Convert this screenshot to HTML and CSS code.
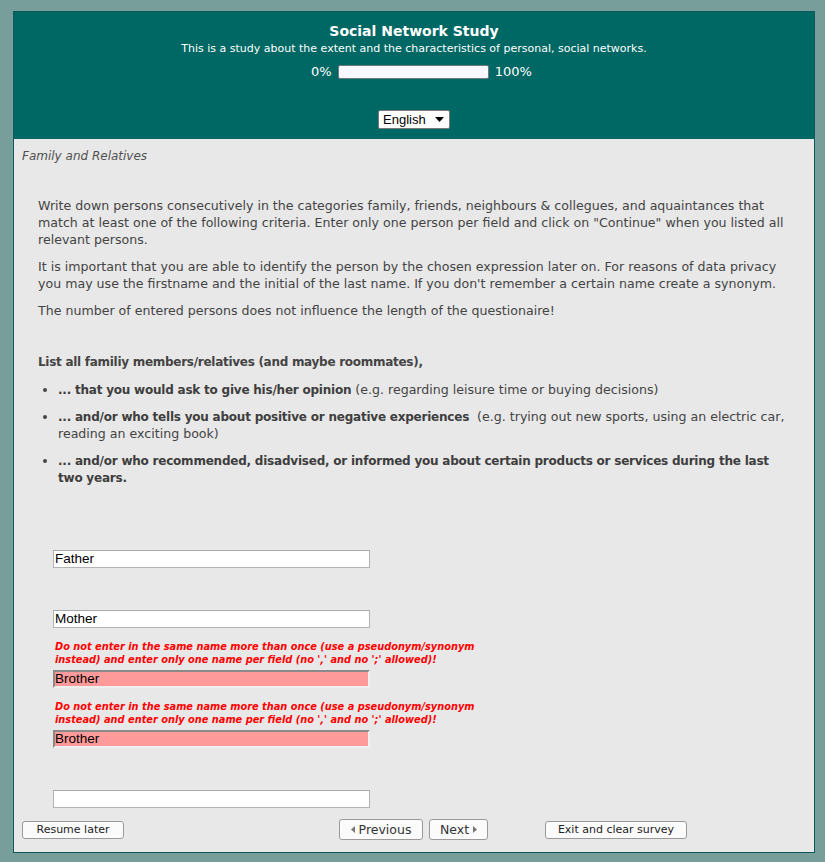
FILE: index.html
```html
<!DOCTYPE html>
<html>
<head>
<meta charset="utf-8">
<link rel="stylesheet" href="styles.css">
</head>
<body>
<div class="page">
  <header class="top">
    <h1 class="title">Social Network Study</h1>
    <p class="desc">This is a study about the extent and the characteristics of personal, social networks.</p>
    <div class="progress">
      <span>0%</span>
      <span class="bar"></span>
      <span>100%</span>
    </div>
    <div class="lang">
      <span class="select">English <svg width="9" height="5" viewBox="0 0 9 5"><path d="M0 0H9L4.5 5Z" fill="#000"/></svg></span>
    </div>
  </header>
  <main class="content">
    <div class="group">Family and Relatives</div>
    <div class="intro">
      <p>Write down persons consecutively in the categories family, friends, neighbours &amp; collegues, and aquaintances that match at least one of the following criteria. Enter only one person per field and click on "Continue" when you listed all relevant persons.</p>
      <p>It is important that you are able to identify the person by the chosen expression later on. For reasons of data privacy you may use the firstname and the initial of the last name. If you don't remember a certain name create a synonym.</p>
      <p>The number of entered persons does not influence the length of the questionaire!</p>
    </div>
    <div class="question">
      <p class="qhead">List all familiy members/relatives (and maybe roommates),</p>
      <ul class="crit">
        <li><b>... that you would ask to give his/her opinion</b> (e.g. regarding leisure time or buying decisions)</li>
        <li><b>... and/or who tells you about positive or negative experiences</b>&nbsp; (e.g. trying out new sports, using an electric car, reading an exciting book)</li>
        <li><b>... and/or who recommended, disadvised, or informed you about certain products or services during the last two years.</b></li>
      </ul>
    </div>
    <div class="fields">
      <div class="field"><div class="err"></div><div class="inp">Father</div></div>
      <div class="field"><div class="err"></div><div class="inp">Mother</div></div>
      <div class="field"><div class="err">Do not enter in the same name more than once (use a pseudonym/synonym instead) and enter only one name per field (no ',' and no ';' allowed)!</div><div class="inp bad">Brother</div></div>
      <div class="field"><div class="err">Do not enter in the same name more than once (use a pseudonym/synonym instead) and enter only one name per field (no ',' and no ';' allowed)!</div><div class="inp bad">Brother</div></div>
      <div class="field"><div class="err"></div><div class="inp"></div></div>
    </div>
    <div class="nav">
      <span class="btn small resume">Resume later</span>
      <span class="navmid">
        <span class="btn big prev"><svg width="4" height="7" viewBox="0 0 4 7"><path d="M4 0V7L0 3.5Z" fill="#777"/></svg> Previous</span>
        <span class="btn big next">Next <svg width="4" height="7" viewBox="0 0 4 7"><path d="M0 0V7L4 3.5Z" fill="#777"/></svg></span>
      </span>
      <span class="btn small exit">Exit and clear survey</span>
    </div>
  </main>
</div>
</body>
</html>
```
FILE: styles.css
```css
html, body { margin: 0; padding: 0; }
body {
  background: #789e9c;
  font-family: "DejaVu Sans", Verdana, sans-serif;
  width: 825px;
  height: 862px;
  overflow: hidden;
}
.page {
  margin: 11px 0 0 13px;
  width: 802px;
  border: 1px solid #0b5c59;
  background: #e8e8e8;
  height: 842px;
  box-sizing: border-box;
  display: flex;
  flex-direction: column;
}
.top {
  background: #006864;
  color: #fff;
  text-align: center;
  height: 127px;
  padding-top: 10px;
  box-sizing: border-box;
}
.title {
  margin: 0;
  font-size: 14px;
  line-height: 18px;
  font-weight: bold;
}
.desc {
  margin: 2px 0 0;
  font-size: 11px;
  line-height: 14px;
}
.progress {
  margin-top: 8px;
  display: flex;
  justify-content: center;
  align-items: center;
  gap: 6px;
  font-size: 13px;
  line-height: 16px;
  margin-left: 15px;
}
.bar {
  display: inline-block;
  width: 151px;
  height: 14px;
  box-sizing: border-box;
  background: #f7f8fd;
  border: 1px solid #6f7b7b;
  border-radius: 2px;
}
.lang {
  margin-top: 30px;
  display: flex;
  justify-content: center;
}
.select {
  display: inline-flex;
  align-items: center;
  justify-content: space-between;
  width: 72px;
  height: 19px;
  box-sizing: border-box;
  padding: 0 5px 0 4px;
  background: #fff;
  color: #000;
  border: 1px solid #7a7a7a;
  border-radius: 2px;
  font-family: "Liberation Sans", Arial, sans-serif;
  font-size: 13px;
}
.content {
  flex: 1;
  color: #444;
  font-size: 12.6px;
  position: relative;
}
.group {
  font-style: italic;
  font-size: 12px;
  padding: 9px 0 0 8px;
  line-height: 16px;
  color: #505050;
}
.intro {
  padding: 33px 19px 0 24px;
  line-height: 17px;
}
.intro p { margin: 0 0 10px; }
.question { padding: 25px 19px 0 24px; line-height: 17px; }
.qhead {
  margin: 0 0 10px;
  font-weight: bold;
  font-size: 12px;
  letter-spacing: -0.28px;
}
.crit { margin: 0; padding: 0 0 0 20px; }
.crit li { margin-bottom: 10px; line-height: 17px; }
.crit b {
  color: #3e3e3e;
  font-size: 12px;
  letter-spacing: -0.22px;
  line-height: 14px;
}
.fields { padding: 36px 0 0 39px; }
.field { height: 60px; display: flex; flex-direction: column; justify-content: flex-end; }
.field:first-child { height: 36px; }
.err {
  color: #ff0000;
  font-size: 9.8px;
  font-weight: bold;
  font-style: italic;
  line-height: 13px;
  width: 430px;
  margin-bottom: 4px;
  padding-left: 2px;
}
.inp {
  width: 317px;
  height: 18px;
  box-sizing: border-box;
  background: #fff;
  border: 1px solid #b2b2b8;
  border-top-color: #a9a9ae;
  font-family: "Liberation Sans", Arial, sans-serif;
  font-size: 13.5px;
  color: #000;
  line-height: 16px;
  padding-left: 1px;
}
.inp.bad {
  background: #ff9a9a;
  border: 2px solid #f0f0f0;
  border-top-color: #8a8a8a;
  border-left-color: #8a8a8a;
  line-height: 14px;
  padding-left: 0;
}
.nav {
  position: absolute;
  left: 8px;
  right: 0;
  bottom: 12px;
  display: flex;
  align-items: center;
}
.btn {
  display: inline-flex;
  align-items: center;
  justify-content: center;
  background: #fbfbfb;
  border: 1px solid #9a9a9a;
  border-radius: 3px;
  color: #222;
  box-sizing: border-box;
}
.btn.small { height: 18px; font-size: 11px; }
.btn.big { height: 21px; font-size: 12.5px; gap: 4px; color: #333; }
.resume { width: 102px; }
.navmid { margin-left: 215px; display: flex; gap: 6px; }
.prev { width: 84px; }
.next { width: 59px; }
.exit { width: 142px; margin-left: 57px; }
```
